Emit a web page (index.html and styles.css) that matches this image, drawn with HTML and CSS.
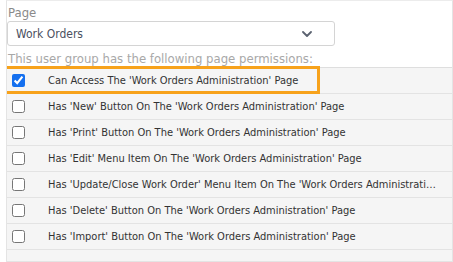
FILE: index.html
```html
<!doctype html>
<html>
    <head>
        <meta charset="utf-8">
        <meta name="viewport" content="width=device-width,initial-scale=1">
        <title>Page Permissions</title>
        <link rel="stylesheet" href="styles.css">
    </head>
    <body>
        <section class="panel">
            <label class="field-label" for="page">Page</label>
            <div class="select-wrap">
                <select id="page" class="page-select">
                    <option>Work Orders</option>
                </select>
                <svg class="chevron" width="10" height="6" viewBox="0 0 10 6">
                    <path d="M1 1 L5 5 L9 1" fill="none" stroke="#5b6270" stroke-width="1.8" stroke-linecap="round" stroke-linejoin="round"/>
                </svg>
            </div>
            <div class="hint">This user group has the following page permissions:</div>
            <ul class="perm-list">
                <li class="perm highlight">
                    <input type="checkbox" checked>
                    <span class="perm-text">Can Access The 'Work Orders Administration' Page</span>
                </li>
                <li class="perm">
                    <input type="checkbox">
                    <span class="perm-text">Has 'New' Button On The 'Work Orders Administration' Page</span>
                </li>
                <li class="perm">
                    <input type="checkbox">
                    <span class="perm-text">Has 'Print' Button On The 'Work Orders Administration' Page</span>
                </li>
                <li class="perm">
                    <input type="checkbox">
                    <span class="perm-text">Has 'Edit' Menu Item On The 'Work Orders Administration' Page</span>
                </li>
                <li class="perm">
                    <input type="checkbox">
                    <span class="perm-text">Has 'Update/Close Work Order' Menu Item On The 'Work Orders Administration' Page</span>
                </li>
                <li class="perm">
                    <input type="checkbox">
                    <span class="perm-text">Has 'Delete' Button On The 'Work Orders Administration' Page</span>
                </li>
                <li class="perm">
                    <input type="checkbox">
                    <span class="perm-text">Has 'Import' Button On The 'Work Orders Administration' Page</span>
                </li>
            </ul>
        </section>
    </body>
</html>
```

FILE: styles.css
```css
body {
    margin: 0;
    font-family: "DejaVu Sans Condensed", "DejaVu Sans", Verdana, sans-serif;
    font-stretch: condensed;
    background: #fff;
    color: #333;
}
.panel {
    margin-left: 6px;
    border: 1px solid #e4e4e4;
    border-top-color: #ececec;
    display: flex;
    flex-direction: column;
    box-sizing: border-box;
    height: 262px;
    overflow: hidden;
}
.field-label {
    display: block;
    margin: 4px 0 0 1px;
    font-size: 13px;
    line-height: 16px;
    color: #8a8a8a;
}
.select-wrap {
    position: relative;
    width: 328px;
}
.page-select {
    -webkit-appearance: none;
    appearance: none;
    display: block;
    width: 100%;
    height: 25px;
    margin: 0;
    padding: 0 0 0 8px;
    font-family: inherit;
    font-stretch: condensed;
    font-size: 12px;
    color: #4a5060;
    background: #fff;
    border: 1px solid #d4d4d4;
    border-radius: 3px;
}
.chevron {
    position: absolute;
    right: 23px;
    top: 10px;
    pointer-events: none;
}
.hint {
    margin: 5px 0 0 1px;
    font-size: 13px;
    line-height: 16px;
    color: #a8a8a8;
    white-space: nowrap;
}
.perm-list {
    list-style: none;
    margin: 0;
    padding: 0;
    flex: 1;
    background: #f5f5f5;
    border-top: 1px solid #dedede;
}
.perm {
    display: flex;
    align-items: center;
    height: 26px;
    border-bottom: 1px solid #e3e3e3;
    box-sizing: border-box;
    position: relative;
}
.perm input {
    width: 13px;
    height: 13px;
    margin: 0 0 0 5px;
    accent-color: #1570ef;
    flex: none;
}
.perm-text {
    margin-left: 23px;
    padding-right: 12px;
    font-size: 11px;
    color: #333;
    white-space: nowrap;
    overflow: hidden;
    text-overflow: ellipsis;
}
.highlight::after {
    content: "";
    position: absolute;
    z-index: 1;
    left: -3px;
    top: -2px;
    width: 316px;
    height: 28px;
    border: 3px solid #f7a21b;
    box-sizing: border-box;
    pointer-events: none;
}
```
